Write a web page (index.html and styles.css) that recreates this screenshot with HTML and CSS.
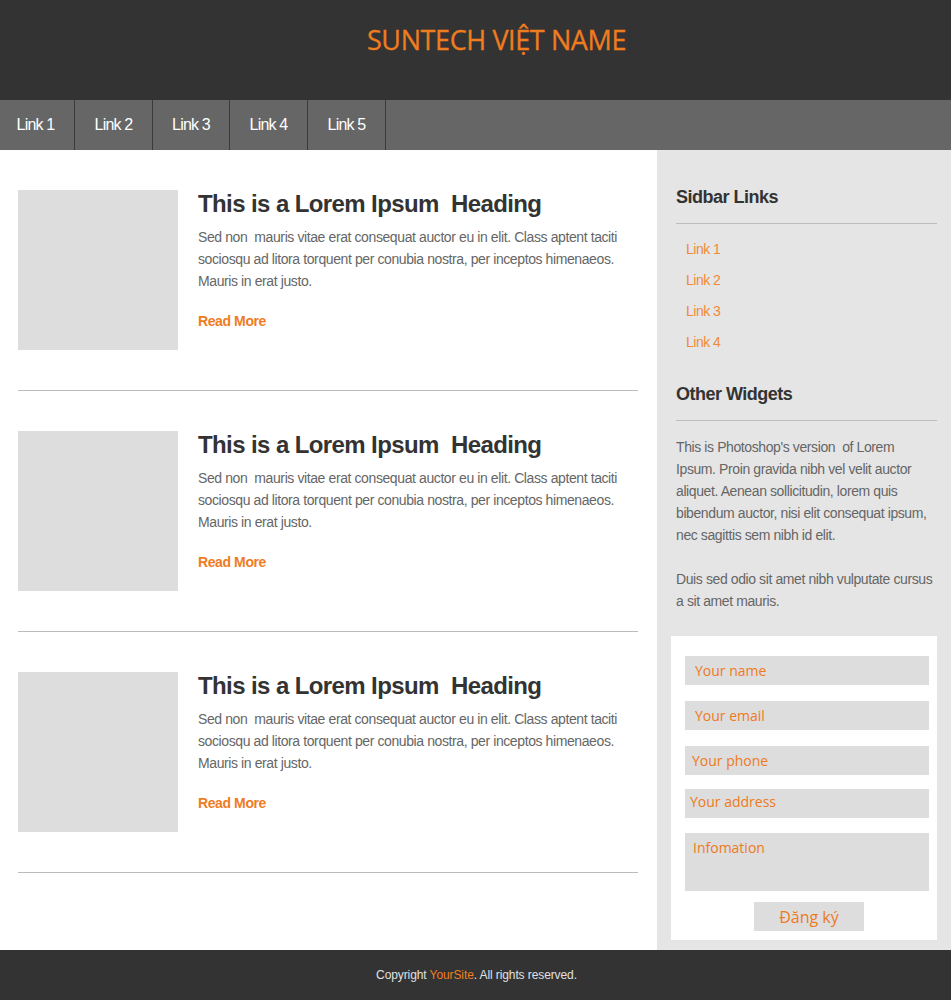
FILE: index.html
```html
<!DOCTYPE html>
<html lang="vi">
<head>
<meta charset="utf-8">
<title>SUNTECH VIỆT NAME</title>
<link rel="stylesheet" href="styles.css">
</head>
<body>
<header class="site-header">
  <h1 class="site-title">SUNTECH VIỆT NAME</h1>
</header>
<nav class="main-nav">
  <a class="nav-item" href="#">Link 1</a>
  <a class="nav-item" href="#">Link 2</a>
  <a class="nav-item" href="#">Link 3</a>
  <a class="nav-item" href="#">Link 4</a>
  <a class="nav-item" href="#">Link 5</a>
</nav>
<div class="page">
  <main class="content">
    <article class="post">
      <div class="post-thumb"></div>
      <div class="post-body">
        <h2 class="post-title">This is a Lorem Ipsum &nbsp;Heading</h2>
        <p class="post-text">Sed non &nbsp;mauris vitae erat consequat auctor eu in elit. Class aptent taciti<br>sociosqu ad litora torquent per conubia nostra, per inceptos himenaeos.<br>Mauris in erat justo.</p>
        <a class="read-more" href="#">Read More</a>
      </div>
    </article>
    <hr class="divider">
    <article class="post">
      <div class="post-thumb"></div>
      <div class="post-body">
        <h2 class="post-title">This is a Lorem Ipsum &nbsp;Heading</h2>
        <p class="post-text">Sed non &nbsp;mauris vitae erat consequat auctor eu in elit. Class aptent taciti<br>sociosqu ad litora torquent per conubia nostra, per inceptos himenaeos.<br>Mauris in erat justo.</p>
        <a class="read-more" href="#">Read More</a>
      </div>
    </article>
    <hr class="divider">
    <article class="post">
      <div class="post-thumb"></div>
      <div class="post-body">
        <h2 class="post-title">This is a Lorem Ipsum &nbsp;Heading</h2>
        <p class="post-text">Sed non &nbsp;mauris vitae erat consequat auctor eu in elit. Class aptent taciti<br>sociosqu ad litora torquent per conubia nostra, per inceptos himenaeos.<br>Mauris in erat justo.</p>
        <a class="read-more" href="#">Read More</a>
      </div>
    </article>
    <hr class="divider">
  </main>
  <aside class="sidebar">
    <section class="widget">
      <h3 class="widget-title">Sidbar Links</h3>
      <hr class="widget-rule">
      <ul class="side-links">
        <li><a href="#">Link 1</a></li>
        <li><a href="#">Link 2</a></li>
        <li><a href="#">Link 3</a></li>
        <li><a href="#">Link 4</a></li>
      </ul>
    </section>
    <section class="widget widget-other">
      <h3 class="widget-title">Other Widgets</h3>
      <hr class="widget-rule">
      <p class="widget-text">This is Photoshop's version &nbsp;of Lorem<br>Ipsum. Proin gravida nibh vel velit auctor<br>aliquet. Aenean sollicitudin, lorem quis<br>bibendum auctor, nisi elit consequat ipsum,<br>nec sagittis sem nibh id elit.</p>
      <p class="widget-text">Duis sed odio sit amet nibh vulputate cursus<br>a sit amet mauris.</p>
    </section>
    <form class="contact-form">
      <input class="field f-name" type="text" placeholder="Your name">
      <input class="field f-email" type="text" placeholder="Your email">
      <input class="field f-phone" type="text" placeholder="Your phone">
      <input class="field f-address" type="text" placeholder="Your address">
      <textarea class="field f-info" placeholder="Infomation"></textarea>
      <button class="submit" type="button">Đăng ký</button>
    </form>
  </aside>
</div>
<footer class="site-footer">
  <p class="copyright">Copyright <a href="#">YourSite</a>. All rights reserved.</p>
</footer>
</body>
</html>
```
FILE: styles.css
```css
* { box-sizing: border-box; }
html, body { margin: 0; padding: 0; }
body {
  width: 951px;
  font-family: "Liberation Sans", Arial, sans-serif;
  background: #ffffff;
}
a { text-decoration: none; }

.site-header {
  height: 100px;
  background: #333333;
  display: flex;
  align-items: flex-start;
  justify-content: center;
  padding-left: 42px;
}
.site-title {
  margin: 21px 0 0;
  font-family: "Open Sans", "Noto Sans", sans-serif;
  font-weight: 400;
  font-size: 27px;
  line-height: 38px;
  letter-spacing: -0.4px;
  color: #ef7c1f;
  -webkit-text-stroke: 0.3px #ef7c1f;
}

.main-nav {
  height: 50px;
  background: #666666;
  display: flex;
}
.nav-item {
  width: 78px;
  height: 50px;
  line-height: 50px;
  text-align: center;
  color: #ffffff;
  font-size: 16px;
  letter-spacing: -0.8px;
  border-right: 1px solid #3a3a3a;
}
.nav-item:first-child { width: 75px; padding-right: 3px; }
.nav-item:nth-child(3) { width: 77px; }

.page {
  display: flex;
  align-items: stretch;
}
.content {
  width: 657px;
  padding: 40px 19px 0 18px;
}
.post {
  display: flex;
  gap: 20px;
  height: 160px;
}
.post-thumb {
  width: 160px;
  height: 160px;
  flex: none;
  background: #dddddd;
}
.post-body { flex: 1; }
.post-title {
  margin: 0;
  font-size: 24px;
  line-height: 28px;
  font-weight: 700;
  color: #333333;
  letter-spacing: -0.6px;
}
.post-text {
  margin: 8px 0 0;
  font-size: 14px;
  line-height: 22px;
  color: #666666;
  letter-spacing: -0.4px;
}
.read-more {
  display: block;
  margin-top: 18px;
  font-size: 14px;
  line-height: 22px;
  font-weight: 700;
  color: #ef7c1f;
  letter-spacing: -0.4px;
}
.divider {
  margin: 40px 0;
  border: 0;
  border-top: 1px solid #bbbbbb;
  height: 0;
}

.sidebar {
  width: 294px;
  flex: none;
  background: #e5e5e5;
  padding: 35px 14px 10px 14px;
}
.widget { padding-left: 5px; }
.widget-title {
  margin: 0;
  font-size: 18px;
  line-height: 24px;
  font-weight: 700;
  color: #333333;
  letter-spacing: -0.5px;
}
.widget-rule {
  margin: 14px 0 0;
  border: 0;
  border-top: 1px solid #bdbdbd;
  height: 0;
}
.side-links {
  list-style: none;
  margin: 10px 0 0;
  padding: 0 0 0 10px;
}
.side-links li {
  line-height: 31px;
  font-size: 14px;
  letter-spacing: -0.5px;
}
.side-links a { color: #f08a3a; }
.widget-other { margin-top: 24px; }
.widget-text {
  margin: 15px 0 0;
  font-size: 14px;
  line-height: 22px;
  color: #666666;
  letter-spacing: -0.4px;
}
.widget-text + .widget-text { margin-top: 22px; }

.contact-form {
  margin-top: 24px;
  background: #ffffff;
  padding: 20px 8px 9px 14px;
  display: flex;
  flex-direction: column;
}
.field {
  display: block;
  width: 244px;
  height: 29px;
  border: 0;
  outline: 0;
  background: #dddddd;
  font-family: "Open Sans", "Noto Sans", sans-serif;
  font-size: 14px;
  color: #ee7a1e;
  padding: 0 0 0 10px;
  margin: 0;
}
.field::placeholder { color: #ee7a1e; opacity: 1; }
.f-email { margin-top: 16px; }
.f-phone { margin-top: 16px; padding-left: 7px; }
.f-address { margin-top: 14px; padding-left: 5px; padding-bottom: 4px; }
.f-info {
  margin-top: 15px;
  height: 58px;
  resize: none;
  padding: 5px 0 0 8px;
  line-height: 20px;
}
.submit {
  align-self: center;
  margin: 11px 0 0 4px;
  width: 110px;
  height: 29px;
  border: 0;
  background: #dddddd;
  color: #ee7a1e;
  font-family: "Open Sans", "Noto Sans", sans-serif;
  font-size: 16px;
  padding: 0;
}

.site-footer {
  height: 50px;
  background: #333333;
  display: flex;
  align-items: center;
  justify-content: center;
}
.copyright {
  margin: 0 0 1px 2px;
  font-size: 12px;
  color: #e0e0e0;
  letter-spacing: -0.1px;
}
.copyright a { color: #f07f1e; }
```
